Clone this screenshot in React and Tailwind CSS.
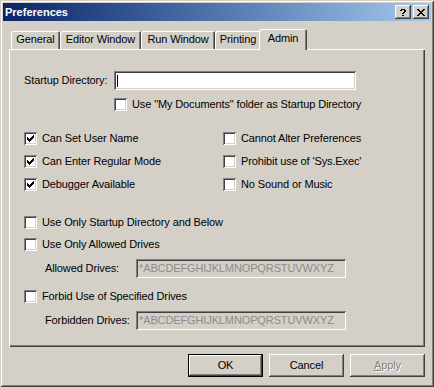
import React from "react";

const CHECK = ["......#", ".....##", "#...###", "##.###.", "#####..", ".###...", "..#...."];
const CLOSE = ["##....##", ".##..##.", "..####..", "...##...", "..####..", ".##..##.", "##....##"];
const HELP = [".####.", "##..##", "....##", "...##.", "..##..", "......", "..##.."];

const Pixels = ({ rows, color = "#000" }) => (
  <svg width={rows[0].length} height={rows.length} shapeRendering="crispEdges" className="block">
    {rows.flatMap((r, y) =>
      [...r].map((c, x) =>
        c === "#" ? <rect key={`${x}-${y}`} x={x} y={y} width="1" height="1" fill={color} /> : null
      )
    )}
  </svg>
);

const sunken =
  "shadow-[inset_1px_1px_0_#808080,inset_-1px_-1px_0_#ffffff,inset_2px_2px_0_#404040,inset_-2px_-2px_0_#d4d0c8]";
const raised =
  "shadow-[inset_-1px_-1px_0_#404040,inset_1px_1px_0_#ffffff,inset_-2px_-2px_0_#808080]";

const Check = ({ checked, label }) => (
  <div className="flex items-center gap-[5px] h-[13px]">
    <span className={`w-[13px] h-[13px] bg-white shrink-0 relative ${sunken}`}>
      {checked && (
        <span className="absolute left-[3px] top-[3px]">
          <Pixels rows={CHECK} />
        </span>
      )}
    </span>
    <span className="whitespace-nowrap leading-none">{label}</span>
  </div>
);

const Tab = ({ label, width, active }) =>
  active ? (
    <div
      className={`${width} h-[21px] -mx-[2px] -mb-[1px] relative z-10 bg-[#d4d0c8] flex justify-center pt-[4px] rounded-tl-[2px] rounded-tr-[2px] shadow-[inset_1px_1px_0_#ffffff,inset_-1px_0_0_#404040,inset_-2px_0_0_#808080]`}
    >
      {label}
    </div>
  ) : (
    <div
      className={`${width} h-[18px] flex justify-center pt-[3px] rounded-tl-[2px] rounded-tr-[2px] shadow-[inset_1px_1px_0_#ffffff,inset_-1px_0_0_#404040,inset_-2px_0_0_#808080]`}
    >
      {label}
    </div>
  );

const Button = ({ children, isDefault, disabled }) => (
  <div
    className={`w-[75px] h-[23px] flex items-center justify-center ${
      isDefault
        ? "shadow-[inset_0_0_0_1px_#000000,inset_-2px_-2px_0_#404040,inset_2px_2px_0_#ffffff,inset_-3px_-3px_0_#808080]"
        : raised
    } ${disabled ? "text-[#808080] [text-shadow:1px_1px_0_#ffffff]" : "text-black"}`}
  >
    {children}
  </div>
);

export default function App() {
  return (
    <div
      className={`w-[434px] h-[387px] bg-[#d4d0c8] p-[3px] text-[11px] tracking-[-0.12px] text-black font-['Liberation_Sans',Arial,sans-serif] shadow-[inset_1px_1px_0_#d4d0c8,inset_-1px_-1px_0_#404040,inset_2px_2px_0_#ffffff,inset_-2px_-2px_0_#808080]`}
    >
      {/* Title bar */}
      <div className="h-[18px] flex items-center justify-between pl-[2px] pr-[2px] bg-linear-to-r from-[#0a246a] to-[#a6caf0]">
        <span className="text-white font-bold text-[11px] tracking-normal leading-none">Preferences</span>
        <div className="flex gap-[2px]">
          <div className={`w-[16px] h-[14px] bg-[#d4d0c8] flex items-center justify-center ${raised}`}>
            <Pixels rows={HELP} />
          </div>
          <div className={`w-[16px] h-[14px] bg-[#d4d0c8] flex items-center justify-center ${raised}`}>
            <Pixels rows={CLOSE} />
          </div>
        </div>
      </div>

      <div className="px-[6px]">
        {/* Tabs */}
        <div className="flex items-end h-[20px] mt-[8px] pl-[2px] leading-none">
          <Tab label="General" width="w-[49px]" />
          <Tab label="Editor Window" width="w-[81px]" />
          <Tab label="Run Window" width="w-[74px]" />
          <Tab label="Printing" width="w-[46px]" />
          <Tab label="Admin" width="w-[48px]" active />
        </div>

        {/* Panel */}
        <div className="h-[298px] pl-[15px] pt-[22px] flex flex-col shadow-[inset_1px_1px_0_#ffffff,inset_-1px_-1px_0_#404040,inset_-2px_-2px_0_#808080]">
          <div className="flex items-center h-[19px]">
            <span className="w-[90px] whitespace-nowrap">Startup Directory:</span>
            <div className={`w-[242px] h-[19px] bg-white relative ${sunken}`}>
              <span className="absolute left-[3px] top-[4px] w-px h-[12px] bg-black" />
            </div>
          </div>
          <div className="ml-[90px] mt-[8px]">
            <Check label={'Use "My Documents" folder as Startup Directory'} />
          </div>

          <div className="grid grid-cols-[199px_1fr] gap-y-[10px] mt-[21px]">
            <Check checked label="Can Set User Name" />
            <Check label="Cannot Alter Preferences" />
            <Check checked label="Can Enter Regular Mode" />
            <Check label="Prohibit use of 'Sys.Exec'" />
            <Check checked label="Debugger Available" />
            <Check label="No Sound or Music" />
          </div>

          <div className="mt-[25px]">
            <Check label="Use Only Startup Directory and Below" />
          </div>
          <div className="mt-[9px]">
            <Check label="Use Only Allowed Drives" />
          </div>
          <div className="flex items-center h-[19px] mt-[8px] ml-[21px]">
            <span className="w-[91px] whitespace-nowrap">Allowed Drives:</span>
            <div className={`w-[210px] h-[19px] pl-[3px] flex items-center text-[#8c8c8c] ${sunken}`}>
              *ABCDEFGHIJKLMNOPQRSTUVWXYZ
            </div>
          </div>
          <div className="mt-[12px]">
            <Check label="Forbid Use of Specified Drives" />
          </div>
          <div className="flex items-center h-[19px] mt-[8px] ml-[21px]">
            <span className="w-[91px] whitespace-nowrap">Forbidden Drives:</span>
            <div className={`w-[210px] h-[19px] pl-[3px] flex items-center text-[#8c8c8c] ${sunken}`}>
              *ABCDEFGHIJKLMNOPQRSTUVWXYZ
            </div>
          </div>
        </div>

        {/* Buttons */}
        <div className="flex justify-end gap-[6px] mt-[7px]">
          <Button isDefault>OK</Button>
          <Button>Cancel</Button>
          <Button disabled>
            <span>
              <span className="underline">A</span>pply
            </span>
          </Button>
        </div>
      </div>
    </div>
  );
}
